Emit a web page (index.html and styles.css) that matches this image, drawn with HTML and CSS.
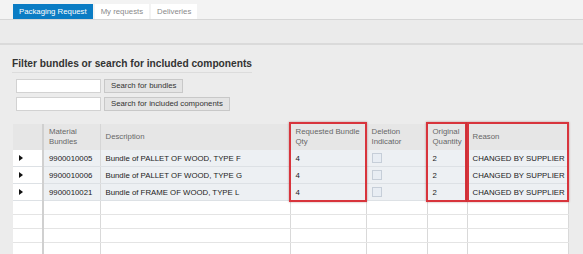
FILE: index.html
```html
<!DOCTYPE html>
<html>
<head>
	<meta charset="utf-8">
	<title>Packaging Request</title>
	<link rel="stylesheet" href="styles.css">
</head>
<body>
	<div class="tabbar">
		<span class="tab active">Packaging Request</span>
		<span class="tab">My requests</span>
		<span class="tab">Deliveries</span>
	</div>
	<div class="subbar"></div>

	<div class="content">
		<h2 class="title">Filter bundles or search for included components</h2>
		<div class="search">
			<div class="srow"><input class="field" /><button class="btn">Search for bundles</button></div>
			<div class="srow"><input class="field" /><button class="btn">Search for included components</button></div>
		</div>

		<div class="gridwrap">
			<table class="grid">
				<colgroup>
					<col style="width:30px"><col style="width:57px"><col style="width:190px"><col style="width:76px">
					<col style="width:61px"><col style="width:40px"><col style="width:101px">
				</colgroup>
				<thead>
					<tr>
						<th class="rh"></th>
						<th class="first">Material Bundles</th>
						<th>Description</th>
						<th>Requested Bundle Qty</th>
						<th>Deletion Indicator</th>
						<th>Original Quantity</th>
						<th>Reason</th>
					</tr>
				</thead>
				<tbody>
					<tr class="data">
						<td class="rh"><span class="arrow"></span></td>
						<td class="first">9900010005</td>
						<td>Bundle of PALLET OF WOOD, TYPE F</td>
						<td>4</td>
						<td><span class="chk"></span></td>
						<td>2</td>
						<td>CHANGED BY SUPPLIER</td>
					</tr>
					<tr class="data">
						<td class="rh"><span class="arrow"></span></td>
						<td class="first">9900010006</td>
						<td>Bundle of PALLET OF WOOD, TYPE G</td>
						<td>4</td>
						<td><span class="chk"></span></td>
						<td>2</td>
						<td>CHANGED BY SUPPLIER</td>
					</tr>
					<tr class="data">
						<td class="rh"><span class="arrow"></span></td>
						<td class="first">9900010021</td>
						<td>Bundle of FRAME OF WOOD, TYPE L</td>
						<td>4</td>
						<td><span class="chk"></span></td>
						<td>2</td>
						<td>CHANGED BY SUPPLIER</td>
					</tr>
					<tr class="empty"><td class="rh"></td><td class="first"></td><td></td><td></td><td></td><td></td><td></td></tr>
					<tr class="empty"><td class="rh"></td><td class="first"></td><td></td><td></td><td></td><td></td><td></td></tr>
					<tr class="empty"><td class="rh"></td><td class="first"></td><td></td><td></td><td></td><td></td><td></td></tr>
					<tr class="empty"><td class="rh"></td><td class="first"></td><td></td><td></td><td></td><td></td><td></td></tr>
				</tbody>
			</table>
			<div class="mark mark-qty"></div>
			<div class="mark mark-orig"></div>
			<div class="mark mark-reason"></div>
		</div>
	</div>
</body>
</html>
```

FILE: styles.css
```css
body {
	margin:0;
	background-color:#ececec;
	font-family:"Liberation Sans", Arial, sans-serif;
	color:#333;
	overflow:hidden;
}

.tabbar {
	height:19px;
	background-color:#f3f3f3;
	border-bottom:1px solid #d6d6d6;
	padding-left:13px;
	display:flex;
	align-items:flex-end;
	gap:2px;
}

.tab {
	height:15px;
	line-height:15px;
	padding:0 6px;
	font-size:7.8px;
	color:#8a8a8a;
	background-color:#fff;
}

.tab.active {
	background-color:#0a7cc4;
	color:#fff;
	padding:0 6px;
}

.subbar {
	height:23px;
	background-color:#ebebeb;
	border-bottom:2px solid #dadada;
}

.content {
	padding:0 0 0 12px;
}

.title {
	display:inline-block;
	margin:13px 0 0 0;
	padding-bottom:2px;
	font-size:10.2px;
	font-weight:bold;
	color:#333;
	border-bottom:1px solid #dcdcdc;
	line-height:12px;
}

.search {
	padding:6px 0 0 4px;
	display:flex;
	flex-direction:column;
	gap:4px;
}

.srow {
	display:flex;
	gap:3px;
	height:14px;
}

.field {
	width:85px;
	height:14px;
	box-sizing:border-box;
	border:1px solid #d2d2d2;
	background-color:#fff;
	padding:0;
	margin:0;
}

.btn {
	height:14px;
	box-sizing:border-box;
	border:1px solid #c8c8c8;
	background-color:#e4e4e4;
	font-family:"Liberation Sans", Arial, sans-serif;
	font-size:7.8px;
	color:#333;
	padding:0 6px;
	margin:0;
	line-height:12px;
}

.gridwrap {
	position:relative;
	margin-top:13px;
	margin-left:1px;
	width:555px;
}

.grid {
	border-collapse:collapse;
	table-layout:fixed;
	width:555px;
	font-size:7.8px;
	color:#333;
}

.grid th {
	height:26px;
	background-color:#e6e6e6;
	font-weight:normal;
	text-align:left;
	vertical-align:middle;
	padding:0 5px;
	border-right:1px solid #d6d6d6;
	color:#666;
	line-height:10px;
}

.grid td {
	padding:0 5px;
	border-right:1px solid #d9d9d9;
	border-bottom:1px solid #dde1e5;
	white-space:nowrap;
	overflow:hidden;
}

.grid tr.data td {
	height:16px;
	background-color:#edf0f3;
	color:#222;
}

.grid tr.data td.rh {
	background-color:#fff;
}

.grid tr.empty td {
	height:13px;
	background-color:#fff;
	border-bottom:1px solid #e4e4e4;
}

.grid .first {
	border-left:2px solid #d0d0d0;
}

.arrow {
	display:inline-block;
	width:0;
	height:0;
	border-top:3px solid transparent;
	border-bottom:3px solid transparent;
	border-left:4px solid #111;
	margin-left:1px;
}

.chk {
	display:inline-block;
	width:8px;
	height:8px;
	border:1px solid #c6ced8;
	background-color:#e8edf3;
	vertical-align:middle;
}

/* red annotation boxes */
.mark {
	position:absolute;
	top:-2px;
	height:80px;
	border:2px solid #d8343c;
	box-shadow:0 0 2px rgba(120,20,20,0.4);
	box-sizing:border-box;
}

.mark-qty {
	left:276px;
	width:78px;
}

.mark-orig {
	left:413px;
	width:41px;
}

.mark-reason {
	left:454px;
	width:102px;
}
```
